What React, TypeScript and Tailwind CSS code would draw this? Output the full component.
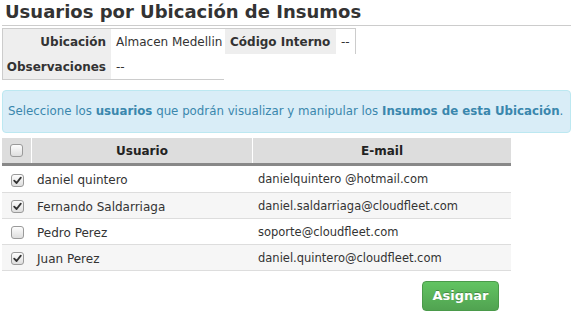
import React from "react";

type User = { name: string; email: string; checked: boolean };

const users: User[] = [
  { name: "daniel quintero", email: "danielquintero @hotmail.com", checked: true },
  { name: "Fernando Saldarriaga", email: "daniel.saldarriaga@cloudfleet.com", checked: true },
  { name: "Pedro Perez", email: "soporte@cloudfleet.com", checked: false },
  { name: "Juan Perez", email: "daniel.quintero@cloudfleet.com", checked: true },
];

function Check({ checked }: { checked: boolean }) {
  return (
    <span className="flex h-[13px] w-[13px] items-center justify-center rounded-[3px] border border-[#9a9a9a] bg-gradient-to-b from-[#fdfdfd] to-[#dedede]">
      {checked && (
        <svg width="9" height="9" viewBox="0 0 9 9" aria-hidden>
          <path d="M1.2 4.6 L3.6 7 L7.8 1.6" fill="none" stroke="#333" strokeWidth="1.8" strokeLinecap="round" strokeLinejoin="round" />
        </svg>
      )}
    </span>
  );
}

export default function App() {
  return (
    <div className="h-[315px] w-[573px] bg-white font-['DejaVu_Sans',Verdana,sans-serif] text-[12px] text-[#333]">
      <h1 className="px-[5px] pt-[1px] text-[18px] font-bold leading-[22px] text-[#333]">
        Usuarios por Ubicación de Insumos
      </h1>
      <div className="mx-[2px] mt-[2px] border-t border-[#ccc]" />

      {/* datos de la ubicacion */}
      <div className="ml-[2px] mt-[2px] w-[354px] border-l border-t border-r border-[#ccc]">
        <div className="flex h-[25px] items-center">
          <div className="flex h-full w-[108px] items-center justify-end bg-[#eee] pr-[5px] font-bold">Ubicación</div>
          <div className="w-[114px] pl-[5px]">Almacen Medellin</div>
          <div className="flex h-full w-[111px] items-center bg-[#eee] pl-[5px] font-bold">Código Interno</div>
          <div className="pl-[5px]">--</div>
        </div>
      </div>
      <div className="ml-[2px] flex h-[26px] w-[222px] items-center border-b border-l border-[#ccc]">
        <div className="flex h-full w-[108px] items-center justify-end bg-[#eee] pr-[5px] font-bold">Observaciones</div>
        <div className="pl-[5px]">--</div>
      </div>

      <div className="mx-[2px] mt-[10px] flex h-[43px] items-center whitespace-nowrap rounded-[4px] border border-[#bce8f1] bg-[#d9edf7] px-[5px] text-[11.8px] text-[#3a87ad]">
        <span>
          Seleccione los <b>usuarios</b> que podrán visualizar y manipular los <b>Insumos de esta Ubicación</b>.
        </span>
      </div>

      <div className="ml-[2px] mt-[5px] w-[509px]">
        <div className="flex h-[28px] border-b-[3px] border-[#888] bg-[#dddddd] font-bold text-[#222]">
          <div className="flex w-[30px] items-center justify-center border-r border-white">
            <Check checked={false} />
          </div>
          <div className="flex w-[221px] items-center justify-center border-r border-white">Usuario</div>
          <div className="flex flex-1 items-center justify-center">E-mail</div>
        </div>
        {users.map((u, i) => (
          <div
            key={u.name}
            className={`flex items-center border-b border-[#ddd] pt-[2px] ${i === 0 ? "h-[27px]" : "h-[26px]"} ${i % 2 === 1 ? "bg-[#f6f6f6]" : "bg-white"}`}
          >
            <div className="flex w-[30px] justify-center">
              <Check checked={u.checked} />
            </div>
            <div className="w-[221px] pl-[5px]">{u.name}</div>
            <div className="flex-1 pl-[5px] text-[11.5px]">{u.email}</div>
          </div>
        ))}
      </div>

      <div className="mt-[10px] flex w-[499px] justify-end">
        <button className="h-[30px] w-[77px] rounded-[4px] border border-[#4a9a4a] bg-gradient-to-b from-[#62c462] to-[#51a351] text-[13px] font-bold text-white [text-shadow:0_-1px_0_rgba(0,0,0,0.25)]">
          Asignar
        </button>
      </div>
    </div>
  );
}
